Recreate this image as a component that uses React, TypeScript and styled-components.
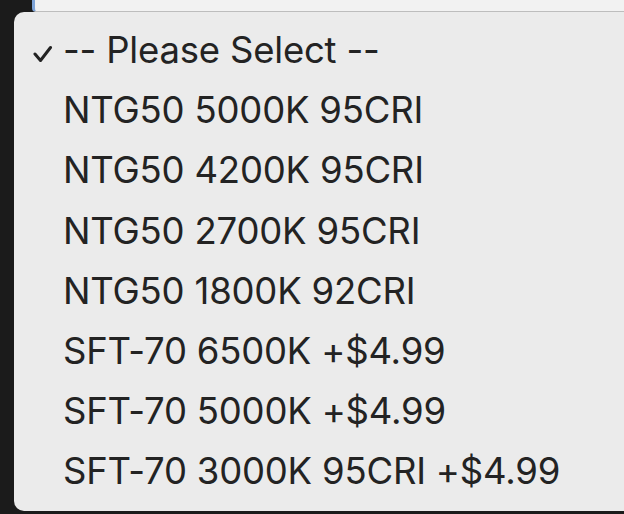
import React from 'react';
import styled, { createGlobalStyle } from 'styled-components';

const options = [
  '-- Please Select --',
  'NTG50 5000K 95CRI',
  'NTG50 4200K 95CRI',
  'NTG50 2700K 95CRI',
  'NTG50 1800K 92CRI',
  'SFT-70 6500K +$4.99',
  'SFT-70 5000K +$4.99',
  'SFT-70 3000K 95CRI +$4.99',
];

const GlobalStyle = createGlobalStyle`
  html, body {
    margin: 0;
    padding: 0;
    background: #1b1b1b;
    overflow: hidden;
  }
  body {
    font-family: Inter, "Liberation Sans", Arial, sans-serif;
  }
`;

const Page = styled.div`
  position: relative;
  width: 624px;
  height: 514px;
  overflow: hidden;
  background: #1b1b1b;
`;

const SelectBox = styled.div`
  margin-left: 32px;
  margin-top: -10px;
  height: 22px;
  width: 620px;
  box-sizing: border-box;
  border: 3px solid #7ea4d8;
  border-radius: 4px;
  background: #f2f2f2;
  border-bottom: 1px solid #bdbdbd;
`;

const Menu = styled.ul`
  position: absolute;
  left: 14px;
  top: 12px;
  width: 640px;
  height: 499px;
  margin: 0;
  padding: 8px 0 10px;
  box-sizing: border-box;
  list-style: none;
  background: #ebebeb;
  border-radius: 10px;
`;

const Item = styled.li`
  display: flex;
  align-items: center;
  height: 60.2px;
  color: #232323;
  font-size: 36.5px;
  letter-spacing: -0.2px;
  white-space: nowrap;
`;

const CheckCell = styled.span`
  width: 49px;
  display: flex;
  padding-left: 19px;
  padding-top: 7px;
  box-sizing: border-box;
`;

const Check = () => (
  <svg width="20" height="18" viewBox="0 0 20 18">
    <polyline
      points="2,9 7.5,15.5 17.5,2.5"
      fill="none"
      stroke="#232323"
      strokeWidth="3"
      strokeLinecap="round"
      strokeLinejoin="round"
    />
  </svg>
);

export default function App() {
  return (
    <Page>
      <GlobalStyle />
      <SelectBox />
      <Menu>
        {options.map((label, i) => (
          <Item key={label}>
            <CheckCell>{i === 0 && <Check />}</CheckCell>
            {label}
          </Item>
        ))}
      </Menu>
    </Page>
  );
}
